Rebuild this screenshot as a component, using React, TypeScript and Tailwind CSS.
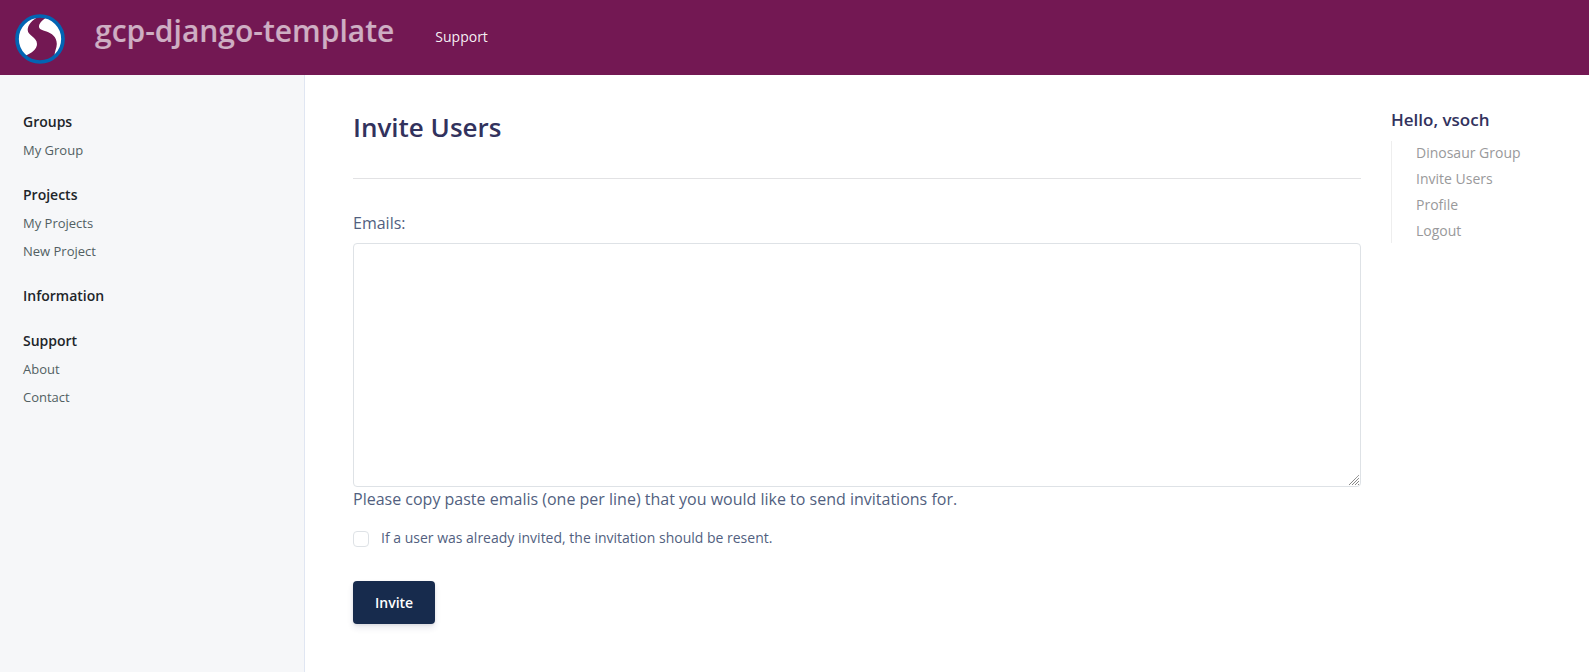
const navSections = [
  { title: "Groups", links: ["My Group"] },
  { title: "Projects", links: ["My Projects", "New Project"] },
  { title: "Information", links: [] },
  { title: "Support", links: ["About", "Contact"] },
];

const userLinks = ["Dinosaur Group", "Invite Users", "Profile", "Logout"];

function Logo() {
  return (
    <svg viewBox="0 0 50 50" className="size-[50px]" aria-hidden="true">
      <circle cx="25" cy="25" r="23" fill="#fff" />
      <path
        d="M23.500 2.500C17 6 12.700 11 12.700 16C12.700 21.500 22 23 22 30C22 35 17 39 10 42L16 48L25 49L34 48L39.500 42C39.500 37.500 41.800 34 41.800 30C41.800 22.500 36.500 19.500 31.500 17.500C27 16 24 15.500 24 12.500C24 9.500 27 6.500 30.500 4Z"
        fill="#731853"
      />
      <circle cx="25" cy="25" r="23" fill="none" stroke="#0264b3" strokeWidth="3.700" />
    </svg>
  );
}

function Header() {
  return (
    <header className="flex h-[75px] items-start bg-[#731853] pl-[15px] text-white">
      <a href="#" aria-label="Home" className="mt-[14px] shrink-0">
        <Logo />
      </a>
      <a href="#" className="ml-[30px] mt-2 text-[30px] font-semibold leading-[45px] text-white/65">
        gcp-django-template
      </a>
      <nav className="ml-[41px] mt-[26px] text-sm leading-[21px]">
        <a href="#" className="text-white/95">Support</a>
      </nav>
    </header>
  );
}

function Sidebar() {
  return (
    <nav className="flex w-[305px] shrink-0 flex-col gap-[17px] border-r border-[#e0e6f2] bg-[#f6f7f9] pl-[23px] pt-[33px]">
      {navSections.map((section) => (
        <div key={section.title}>
          <a href="#" className="block text-sm font-semibold leading-7 text-[#212529]">{section.title}</a>
          {section.links.map((link) => (
            <a key={link} href="#" className="block text-[13px] leading-7 text-[#525f63]">{link}</a>
          ))}
        </div>
      ))}
    </nav>
  );
}

function InviteForm() {
  return (
    <main className="min-w-0 flex-1 pb-12 pl-12 text-[#525f7f]">
      <h1 className="pt-8 text-[26px] font-semibold leading-10 text-[#32325d]">Invite Users</h1>
      <hr className="mb-8 mt-[31px] border-[#e2e2e4]" />
      <form>
        <label htmlFor="emails" className="block text-base leading-6">Emails:</label>
        <div className="relative mt-2">
          <textarea
            id="emails"
            className="block h-[244px] w-full resize-none rounded border border-[#dee2e6] bg-white px-3 py-2 outline-none"
          />
          <svg viewBox="0 0 12 12" className="pointer-events-none absolute bottom-px right-px size-3" aria-hidden="true">
            <path d="M1 11L11 1M4 11L11 4M7 11L11 7M10 11L11 10" stroke="#555" strokeDasharray="1 0.500" fill="none" />
          </svg>
        </div>
        <p className="text-base leading-6">
          Please copy paste emalis (one per line) that you would like to send invitations for.
        </p>
        <div className="mt-4 flex items-start">
          <input
            id="resend"
            type="checkbox"
            className="mt-1 size-4 appearance-none rounded border border-[#dee2e6] bg-white checked:bg-[#172b4d]"
          />
          <label htmlFor="resend" className="ml-3 text-sm leading-[21px]">
            If a user was already invited, the invitation should be resent.
          </label>
        </div>
        <button
          type="button"
          className="mt-[33px] h-[43px] rounded bg-[#172b4d] px-[22px] text-sm font-semibold text-white shadow-[0_4px_6px_rgba(50,50,93,0.11),0_1px_3px_rgba(0,0,0,0.08)]"
        >
          Invite
        </button>
      </form>
    </main>
  );
}

function UserMenu() {
  return (
    <aside className="w-[228px] shrink-0 pl-[30px] pt-8">
      <h2 className="text-[17px] font-semibold leading-[26px] text-[#32325d]">Hello, vsoch</h2>
      <ul className="mt-2 flex flex-col gap-0.5 border-l border-[#eeeeee] pl-6 text-sm leading-6 text-[#99999b]">
        {userLinks.map((link) => (
          <li key={link}>
            <a href="#">{link}</a>
          </li>
        ))}
      </ul>
    </aside>
  );
}

export default function App() {
  return (
    <div className="flex min-h-screen flex-col bg-white font-['Open_Sans',sans-serif]">
      <Header />
      <div className="flex flex-1">
        <Sidebar />
        <InviteForm />
        <UserMenu />
      </div>
    </div>
  );
}
